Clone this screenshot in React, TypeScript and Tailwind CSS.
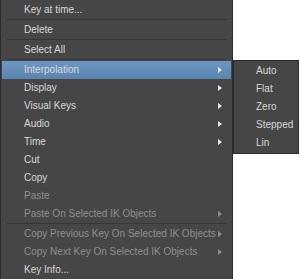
import React from 'react';

type Item =
  | { kind: 'item'; label: string; disabled?: boolean; sub?: boolean; active?: boolean }
  | { kind: 'sep' };

const items: Item[] = [
  { kind: 'item', label: 'Key at time...' },
  { kind: 'sep' },
  { kind: 'item', label: 'Delete' },
  { kind: 'sep' },
  { kind: 'item', label: 'Select All' },
  { kind: 'sep' },
  { kind: 'item', label: 'Interpolation', sub: true, active: true },
  { kind: 'item', label: 'Display', sub: true },
  { kind: 'item', label: 'Visual Keys', sub: true },
  { kind: 'item', label: 'Audio', sub: true },
  { kind: 'item', label: 'Time', sub: true },
  { kind: 'item', label: 'Cut' },
  { kind: 'item', label: 'Copy' },
  { kind: 'item', label: 'Paste', disabled: true },
  { kind: 'item', label: 'Paste On Selected IK Objects', disabled: true, sub: true },
  { kind: 'sep' },
  { kind: 'item', label: 'Copy Previous Key On Selected IK Objects', disabled: true, sub: true },
  { kind: 'item', label: 'Copy Next Key On Selected IK Objects', disabled: true, sub: true },
  { kind: 'item', label: 'Key Info...' },
];

const interpolation = ['Auto', 'Flat', 'Zero', 'Stepped', 'Lin'];

// small right-pointing triangle for submenus
function Arrow({ dim }: { dim?: boolean }) {
  return (
    <svg width="4" height="6" viewBox="0 0 4 6" className="shrink-0">
      <path d="M0 0 L4 3 L0 6 Z" fill={dim ? '#8c8c8c' : '#e6e6e6'} />
    </svg>
  );
}

export default function App() {
  return (
    <div
      className="flex items-start w-[300px] h-[279px] bg-white overflow-hidden text-[10px] leading-none"
      style={{ fontFamily: '"Liberation Sans", Arial, sans-serif' }}
    >
      {/* ── Menú principal ── */}
      <div className="w-[233px] shrink-0 bg-[#464646] border-x border-[#2c2c2c] pt-px px-px">
        {items.map((it, i) =>
          it.kind === 'sep' ? (
            <div key={i} className="h-[2px] mx-[5px] border-t border-[#363636]" />
          ) : (
            <div
              key={i}
              className={`h-[18px] flex items-center pl-[22px] pr-[9px] ${
                it.active ? 'bg-gradient-to-b from-[#6d97c2] to-[#5a85b1]' : ''
              } ${it.disabled ? 'text-[#8e8e8e]' : 'text-[#d8d8d8]'}`}
            >
              <span className="flex-1 whitespace-nowrap">{it.label}</span>
              {it.sub && <Arrow dim={it.disabled} />}
            </div>
          )
        )}
      </div>

      {/* ── Submenú Interpolation ── */}
      <div className="mt-[60px] w-[66px] shrink-0 bg-[#464646] border border-[#2c2c2c] py-px">
        {interpolation.map((label) => (
          <div key={label} className="h-[18px] flex items-center pl-[22px] text-[#d8d8d8]">
            {label}
          </div>
        ))}
      </div>
    </div>
  );
}
